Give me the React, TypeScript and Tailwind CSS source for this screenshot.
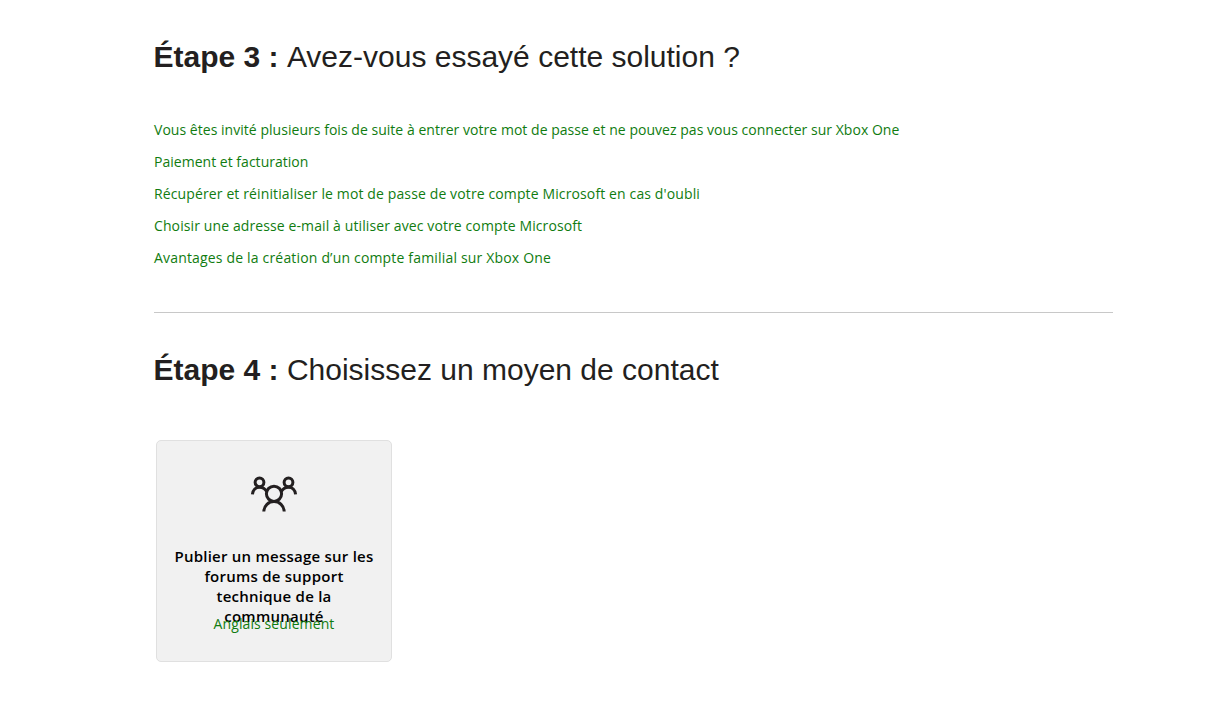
import { type FC } from "react";

interface SolutionLink {
  label: string;
  spacing: string;
}

interface StepHeadingProps {
  step: string;
  title: string;
}

const SOLUTIONS: SolutionLink[] = [
  {
    label:
      "Vous êtes invité plusieurs fois de suite à entrer votre mot de passe et ne pouvez pas vous connecter sur Xbox One",
    spacing: "tracking-[0.035px]",
  },
  { label: "Paiement et facturation", spacing: "tracking-[0.02px]" },
  {
    label:
      "Récupérer et réinitialiser le mot de passe de votre compte Microsoft en cas d'oubli",
    spacing: "tracking-[0.122px]",
  },
  {
    label: "Choisir une adresse e-mail à utiliser avec votre compte Microsoft",
    spacing: "tracking-[0.108px]",
  },
  {
    label: "Avantages de la création d’un compte familial sur Xbox One",
    spacing: "tracking-[0.175px]",
  },
];

const StepHeading: FC<StepHeadingProps> = ({ step, title }) => (
  <h2 className="font-['Liberation_Sans',Arial,sans-serif] text-[30px] leading-10 text-[#231f20] whitespace-nowrap">
    <strong className="-ml-[0.5px] font-bold">{step} : </strong>
    {title}
  </h2>
);

const CommunityIcon: FC = () => (
  <svg
    width="48"
    height="38"
    viewBox="0 0 48 38"
    fill="none"
    stroke="#231f20"
    strokeWidth="3"
    aria-hidden="true"
  >
    <circle cx="9.5" cy="7.3" r="4.4" />
    <circle cx="38.5" cy="7.3" r="4.4" />
    <circle cx="24" cy="18.8" r="7.6" />
    <path d="M2.4 19.4C2.9 15 5.8 12.2 9.5 12.2C12.8 12.2 15.4 13.8 17 17" />
    <path d="M45.6 19.4C45.1 15 42.2 12.2 38.5 12.2C35.2 12.2 32.6 13.8 31 17" />
    <path d="M13.8 36.5C14.2 30.6 18.4 26.6 24 26.6C29.6 26.6 33.8 30.6 34.2 36.5" />
  </svg>
);

const App: FC = () => (
  <main className="h-[714px] overflow-hidden bg-white pl-[154px] pt-[37px] font-['Open_Sans','Noto_Sans',sans-serif] text-[14px]">
    <section className="w-[959px] border-b border-[#c8c8c8] pb-[38px]">
      <StepHeading step="Étape 3" title="Avez-vous essayé cette solution ?" />
      <ul className="mt-[37px]">
        {SOLUTIONS.map(({ label, spacing }) => (
          <li key={label} className="h-8 leading-8 whitespace-nowrap">
            <a href="#" className={`text-[#107c10] ${spacing}`}>
              {label}
            </a>
          </li>
        ))}
      </ul>
    </section>

    <section className="pt-[37px]">
      <StepHeading step="Étape 4" title="Choisissez un moyen de contact" />
      <div className="ml-0.5 mt-[50px] flex h-[222px] w-[236px] flex-col items-center rounded-[5px] border border-[#e0e0e0] bg-[#f1f1f1] pt-[34px] text-center">
        <CommunityIcon />
        <h3 className="mt-[33px] h-[68px] w-[220px] text-[15px] leading-5 font-semibold tracking-[0.24px] text-black">
          <span className="block whitespace-nowrap">Publier un message sur les</span>
          <span className="block">forums de support</span>
          <span className="block">technique de la</span>
          <span className="block">communauté</span>
        </h3>
        <a href="#" className="leading-5 tracking-[0.1px] text-[#107c10]">
          Anglais seulement
        </a>
      </div>
    </section>
  </main>
);

export default App;
